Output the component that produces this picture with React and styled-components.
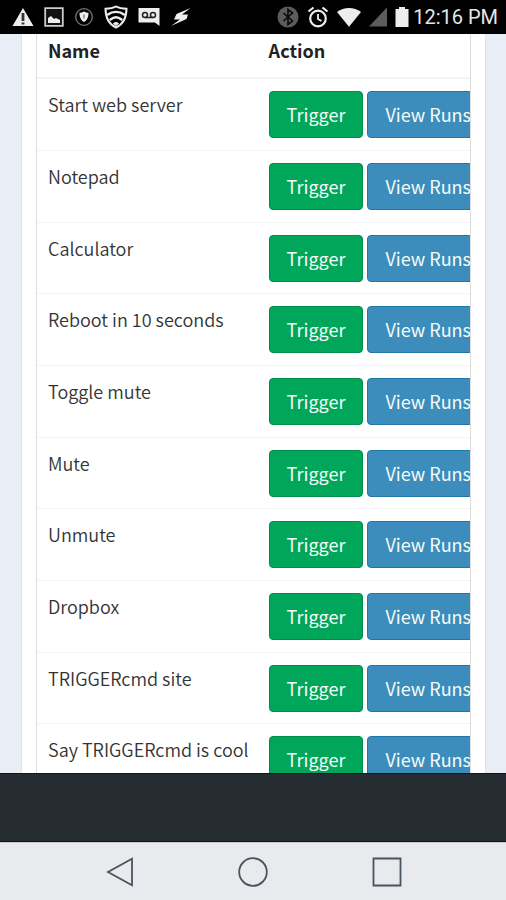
import styled, { createGlobalStyle } from "styled-components";

const commands = [
  "Start web server",
  "Notepad",
  "Calculator",
  "Reboot in 10 seconds",
  "Toggle mute",
  "Mute",
  "Unmute",
  "Dropbox",
  "TRIGGERcmd site",
  "Say TRIGGERcmd is cool",
];

export default function App() {
  return (
    <Screen>
      <GlobalStyle />
      <StatusBar />
      <Content>
        <Box>
          <TableWrap>
            <CommandTable />
          </TableWrap>
        </Box>
      </Content>
      <Footer />
      <NavBar />
    </Screen>
  );
}

function CommandTable() {
  return (
    <Table>
      <thead>
        <tr>
          <HeadCell scope="col">Name</HeadCell>
          <HeadCell scope="col">Action</HeadCell>
        </tr>
      </thead>
      <tbody>
        {commands.map((name) => (
          <Row key={name}>
            <Cell>{name}</Cell>
            <Cell>
              <Actions>
                <Button type="button" $color="#00a65a" $border="#008d4c">
                  Trigger
                </Button>
                <Button type="button" $color="#3c8dbc" $border="#1f77ab">
                  View Runs
                </Button>
              </Actions>
            </Cell>
          </Row>
        ))}
      </tbody>
    </Table>
  );
}

function StatusBar() {
  return (
    <Status>
      <IconGroup $gap="10px">
        <svg width="22" height="20" viewBox="0 0 22 20">
          <path d="M11 1 21.5 19H.5z" fill="#eee" />
          <path d="M9.6 6h2.8v8H9.6zM9.6 15.5h2.8v2H9.6z" fill="#333" />
        </svg>
        <svg width="20" height="20" viewBox="0 0 20 20">
          <path d="M1.2 1.2h17.6v17.6H1.2z" fill="#111" stroke="#ccc" strokeWidth="1.8" />
          <path d="M4 16v-5l3-2 3 3 2-1 4 2v3z" fill="#eee" />
        </svg>
        <svg width="20" height="20" viewBox="0 0 20 20">
          <circle cx="10" cy="10" r="8.3" fill="none" stroke="#777" strokeWidth="1.3" />
          <path d="M10 4.5c1.5 1 3 1.3 4.5 1.3 0 4-1 7.2-4.5 9.2-3.5-2-4.5-5.2-4.5-9.2 1.5 0 3-.3 4.5-1.3z" fill="#eee" />
          <path d="M10 7.5v4" stroke="#888" strokeWidth="1.5" />
        </svg>
        <svg width="24" height="24" viewBox="0 0 24 24" fill="none" stroke="#eee" strokeLinecap="round">
          <path d="M12 1.5c3 1.7 6.5 2.2 10.5 2.2C22.5 12 19.5 19 12 22.5 4.5 19 1.5 12 1.5 3.7 5.5 3.7 9 3.2 12 1.5z" strokeWidth="2" />
          <path d="M4 9.5c4.5-3.5 11.5-3.5 16 0M6.5 14.5c3.5-2.8 7.5-2.8 11 0" strokeWidth="2.4" />
          <path d="M9.5 18.5c1.5-1.3 3.5-1.3 5 0L12 20.5z" fill="#eee" strokeWidth="1" />
        </svg>
        <svg width="22" height="20" viewBox="0 0 22 20">
          <path d="M.5 1h21v18l-4.5-3.5H.5z" fill="#eee" />
          <path d="M7 10.5h8" stroke="#222" strokeWidth="1.5" />
          <circle cx="7" cy="8" r="2.5" fill="none" stroke="#222" strokeWidth="1.5" />
          <circle cx="15" cy="8" r="2.5" fill="none" stroke="#222" strokeWidth="1.5" />
        </svg>
        <svg width="22" height="20" viewBox="0 0 22 20">
          <path d="M20.5 1 6.500 7 4 12.500h6L1 19l15.500-7 1.500-4.500h-6z" fill="#eee" />
        </svg>
      </IconGroup>
      <IconGroup $gap="8px">
        <svg width="22" height="22" viewBox="0 0 22 22">
          <circle cx="11" cy="11" r="10.5" fill="#5c5c5c" />
          <path d="m6.5 7 9 8-4.5 3.5v-15L15.5 7l-9 8" fill="none" stroke="#0a0a0a" strokeWidth="1.6" />
        </svg>
        <svg width="22" height="22" viewBox="0 0 22 22" fill="none" stroke="#eee">
          <circle cx="11" cy="12.5" r="7.8" strokeWidth="2.2" />
          <path d="M11 8v5l3.5 2" strokeWidth="1.8" />
          <path d="m1.5 5.5 5-4M20.5 5.5l-5-4" strokeWidth="2.2" />
        </svg>
        <svg width="24" height="20" viewBox="0 0 24 20">
          <path d="M0 5c7-5.5 17-5.5 24 0L12 19.8z" fill="#eee" />
        </svg>
        <svg width="18" height="20" viewBox="0 0 18 20">
          <path d="M18 .5v19H0z" fill="#5c5c5c" />
        </svg>
        <svg width="14" height="22" viewBox="0 0 14 22">
          <path d="M4 1h6v2h3.5v18H.5V3H4z" fill="#eee" />
        </svg>
        <Time>12:16 PM</Time>
      </IconGroup>
    </Status>
  );
}

function NavBar() {
  return (
    <Nav>
      <NavButton type="button" aria-label="Back">
        <svg width="30" height="30" viewBox="0 0 30 30">
          <path d="M28 1.8v26.4L4 15z" />
        </svg>
      </NavButton>
      <NavButton type="button" aria-label="Home">
        <svg width="30" height="30" viewBox="0 0 30 30">
          <circle cx="15" cy="15" r="13.8" />
        </svg>
      </NavButton>
      <NavButton type="button" aria-label="Recent apps">
        <svg width="30" height="30" viewBox="0 0 30 30">
          <path d="M1.5 1.5h27v27h-27z" />
        </svg>
      </NavButton>
    </Nav>
  );
}

const GlobalStyle = createGlobalStyle`
  * {
    box-sizing: border-box;
  }

  body {
    margin: 0;
    font-family: "Noto Sans CJK SC", "Open Sans", sans-serif;
    color: #333;
  }
`;

const Screen = styled.div`
  display: flex;
  flex-direction: column;
  height: 100vh;
  background: #e9edf5;
`;

const Status = styled.header`
  display: flex;
  flex: none;
  justify-content: space-between;
  align-items: center;
  height: 34px;
  padding: 0 8px 0 12px;
  background: #000;
`;

const IconGroup = styled.div`
  display: flex;
  align-items: center;
  gap: ${({ $gap }) => $gap};
`;

const Time = styled.span`
  font-family: Roboto, sans-serif;
  font-size: 20px;
  line-height: 24px;
  color: #e6e6e6;
  margin-left: -4px;
`;

const Content = styled.main`
  flex: 1;
  min-height: 0;
  padding: 0 20px 0 21px;
  overflow: hidden;
`;

const Box = styled.section`
  padding: 0 14px;
  background: #fff;
  border: solid #e0e3e9;
  border-width: 0 1px;
`;

const TableWrap = styled.div`
  border: solid #ddd;
  border-width: 0 1px;
  overflow: hidden;
`;

const Table = styled.table`
  width: 100%;
  border-collapse: separate;
  border-spacing: 0;
  white-space: nowrap;
`;

const HeadCell = styled.th`
  height: 45px;
  padding: 3px 9px 12px 11px;
  border-bottom: 2px solid #f4f4f4;
  font-size: 18px;
  font-weight: 700;
  line-height: 26px;
  text-align: left;
  vertical-align: top;
  color: #222;
`;

const Cell = styled.td`
  padding: 12px 9px 12px 11px;
  border-bottom: 1px solid #f4f4f4;
  font-size: 18px;
  font-weight: 350;
  line-height: 26px;
  vertical-align: top;
`;

const Row = styled.tr`
  &:nth-child(3n) ${Cell} {
    padding-bottom: 11px;
  }
`;

const Actions = styled.div`
  display: flex;
  gap: 4px;
`;

const Button = styled.button`
  flex: none;
  height: 47px;
  padding: 0 17px 2px;
  border: 1px solid ${({ $border }) => $border};
  border-radius: 4px;
  background: ${({ $color }) => $color};
  color: #f4fbf8;
  font-family: inherit;
  font-size: 18px;
  font-weight: 400;
  line-height: 26px;
  white-space: nowrap;
`;

const Footer = styled.footer`
  flex: none;
  height: 69px;
  background: #262d32;
  border: solid #10161c;
  border-width: 1px 0;
`;

const Nav = styled.nav`
  display: flex;
  flex: none;
  justify-content: center;
  align-items: center;
  gap: 104px;
  height: 58px;
  background: #e8eaee;
  border-top: 1px solid #c4c6cc;
`;

const NavButton = styled.button`
  display: flex;
  padding: 0;
  border: 0;
  background: none;

  svg {
    fill: none;
    stroke: #4a545e;
    stroke-width: 1.8;
  }
`;
